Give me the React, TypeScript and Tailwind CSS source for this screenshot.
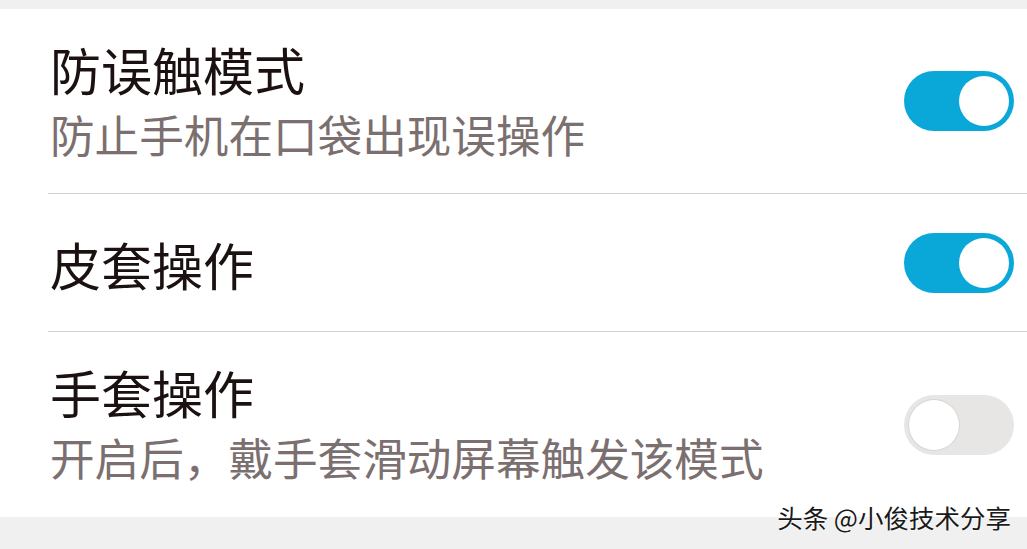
import React, { useState } from 'react';

type Item = {
  id: string;
  title: string;
  desc?: string;
  on: boolean;
};

const items: Item[] = [
  { id: 'pocket', title: '防误触模式', desc: '防止手机在口袋出现误操作', on: true },
  { id: 'cover', title: '皮套操作', on: true },
  { id: 'glove', title: '手套操作', desc: '开启后，戴手套滑动屏幕触发该模式', on: false },
];

const Toggle = ({ on, onClick }: { on: boolean; onClick: () => void }) => (
  <button
    onClick={onClick}
    className={`flex h-[60px] w-[110px] shrink-0 items-center rounded-full p-[5px] ${
      on ? 'justify-end bg-[#0aa8d9]' : 'justify-start bg-[#e8e5e5]'
    }`}
  >
    <span
      className={`block h-[50px] w-[50px] rounded-full bg-white ${
        on ? '' : 'shadow-[0_0_0_1px_#d9d6d6]'
      }`}
    />
  </button>
);

export default function App() {
  const [state, setState] = useState(items);

  const flip = (id: string) =>
    setState((prev) => prev.map((it) => (it.id === id ? { ...it, on: !it.on } : it)));

  return (
    <div
      className="relative h-[549px] w-[1027px] overflow-hidden bg-[#f1f0f0]"
      style={{ fontFamily: '"Noto Sans CJK SC", "Noto Sans", sans-serif' }}
    >
      <div className="mt-[9px] bg-white">
        {state.map((it, i) => (
          <div
            key={it.id}
            className={`ml-[48px] flex items-center justify-between pl-[2px] pr-[13px] ${
              i < state.length - 1 ? 'border-b border-[#d4d2d2]' : ''
            } ${it.desc ? 'h-[185px]' : 'h-[138px]'}`}
          >
            <div className="flex flex-col">
              <div className="mt-[2px] text-[51px] leading-[60px] text-[#1b1111]">{it.title}</div>
              {it.desc && (
                <div className="mt-[3px] text-[44.6px] leading-[64px] text-[#7b6f6f]">
                  {it.desc}
                </div>
              )}
            </div>
            <Toggle on={it.on} onClick={() => flip(it.id)} />
          </div>
        ))}
      </div>

      {/* 水印 */}
      <div
        className="absolute right-[16px] top-[500px] text-[25.5px] leading-[34px] text-[#1a1a1a]"
        style={{ textShadow: '0 0 2px #fff, 0 0 2px #fff' }}
      >
        头条 @小俊技术分享
      </div>
    </div>
  );
}
